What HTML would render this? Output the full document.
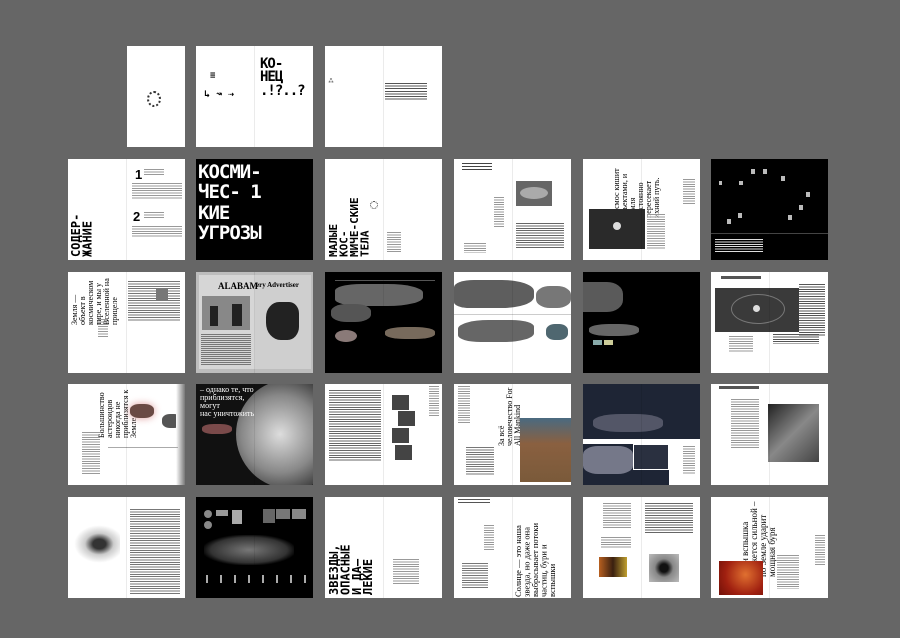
<!DOCTYPE html>
<html><head><meta charset="utf-8"><style>
*{margin:0;padding:0;box-sizing:border-box}
body{width:900px;height:638px;background:#666;position:relative;overflow:hidden;font-family:"Liberation Sans","Noto Sans CJK SC",sans-serif}
.s{position:absolute;width:117px;height:101px;background:#fff;overflow:hidden}
.s:after{content:"";position:absolute;left:58px;top:0;width:1px;height:100%;background:rgba(0,0,0,.08)}
.b{background:#000}
.a{position:absolute}
.t{position:absolute;background:repeating-linear-gradient(#999 0 1px,transparent 1px 2.4px)}
.tw{position:absolute;background:repeating-linear-gradient(#ddd 0 1px,transparent 1px 2.4px)}
.px{position:absolute;font-family:"DejaVu Sans Mono",monospace;font-weight:bold;line-height:.95}
.v{position:absolute;writing-mode:vertical-rl;transform:rotate(180deg);font-weight:bold;font-family:"DejaVu Sans Mono",monospace;line-height:.95}
.sv{position:absolute;writing-mode:vertical-rl;font-family:"Liberation Serif",serif;line-height:1}
</style></head><body>

<!-- ROW 1 -->
<div class="s" style="left:127px;top:46px;width:58px"><div class="a" style="left:20px;top:45px;width:14px;height:16px;border:2px dotted #333;border-radius:50%"></div></div>
<div class="s" style="left:196px;top:46px">
<div class="px" style="left:64px;top:12px;font-size:14px;letter-spacing:-1px">КО-<br>НЕЦ<br>.!?..?</div>
<div class="px" style="left:14px;top:26px;font-size:9px">≡</div>
<div class="px" style="left:8px;top:44px;font-size:10px">↳ ↝ ⇢</div>
</div>
<div class="s" style="left:325px;top:46px">
<div class="a" style="left:3px;top:30px;font-size:6px">⁂</div>
<div class="t" style="left:60px;top:37px;width:42px;height:18px;background:repeating-linear-gradient(#555 0 1px,transparent 1px 2.6px)"></div>
</div>

<!-- ROW 2 -->
<div class="s" style="left:68px;top:159px">
<div class="v" style="left:3px;top:32px;font-size:12px;height:66px">СОДЕР-<br>ЖАНИЕ</div>
<div class="a" style="left:67px;top:8px;font-size:13px;font-weight:bold">1</div>
<div class="t" style="left:76px;top:10px;width:20px;height:6px"></div>
<div class="t" style="left:64px;top:24px;width:50px;height:16px"></div>
<div class="a" style="left:65px;top:50px;font-size:13px;font-weight:bold">2</div>
<div class="t" style="left:76px;top:53px;width:20px;height:6px"></div>
<div class="t" style="left:64px;top:67px;width:50px;height:12px"></div>
</div>
<div class="s b" style="left:196px;top:159px">
<div class="px" style="left:2px;top:3px;font-size:19px;color:#fff;letter-spacing:-1px;line-height:1.07">КОСМИ-<br>ЧЕС- 1<br>КИЕ<br>УГРОЗЫ</div>
</div>
<div class="s" style="left:325px;top:159px">
<div class="v" style="left:4px;top:36px;font-size:11px;height:62px">МАЛЫЕ<br>КОС-<br>МИЧЕ-СКИЕ<br>ТЕЛА</div>
<div class="a" style="left:45px;top:42px;width:8px;height:8px;border:1px dotted #333;border-radius:50%"></div>
<div class="t" style="left:62px;top:73px;width:14px;height:20px"></div>
</div>
<div class="s" style="left:454px;top:159px">
<div class="t" style="left:8px;top:4px;width:30px;height:7px;background:repeating-linear-gradient(#444 0 1px,transparent 1px 3px)"></div>
<div class="a" style="left:62px;top:22px;width:36px;height:25px;background:#666"></div>
<div class="a" style="left:66px;top:28px;width:28px;height:12px;background:#aaa;border-radius:50%"></div>
<div class="t" style="left:40px;top:38px;width:10px;height:30px"></div>
<div class="t" style="left:62px;top:64px;width:48px;height:26px;background:repeating-linear-gradient(#666 0 1px,transparent 1px 2.4px)"></div>
<div class="t" style="left:10px;top:84px;width:22px;height:10px"></div>
</div>
<div class="s" style="left:583px;top:159px">
<div class="sv" style="left:30px;top:3px;font-size:8px;height:56px;width:56px;transform:rotate(180deg)">Космос кишит объектами, и Земля постоянно пересекает ихний путь.</div>
<div class="a" style="left:6px;top:50px;width:56px;height:40px;background:#2a2a2a"></div>
<div class="a" style="left:30px;top:63px;width:8px;height:8px;border-radius:50%;background:#ddd"></div>
<div class="t" style="left:64px;top:55px;width:18px;height:36px"></div>
<div class="t" style="left:100px;top:20px;width:12px;height:26px"></div>
</div>
<div class="s b" style="left:711px;top:159px">
<div class="tw" style="left:4px;top:80px;width:48px;height:14px"></div>
<div class="a" style="left:40px;top:10px;width:4px;height:5px;background:#bbb"></div>
<div class="a" style="left:52px;top:10px;width:4px;height:5px;background:#bbb"></div>
<div class="a" style="left:8px;top:22px;width:3px;height:4px;background:#bbb"></div>
<div class="a" style="left:28px;top:22px;width:4px;height:4px;background:#bbb"></div>
<div class="a" style="left:70px;top:17px;width:4px;height:5px;background:#bbb"></div>
<div class="a" style="left:95px;top:33px;width:4px;height:5px;background:#bbb"></div>
<div class="a" style="left:88px;top:46px;width:4px;height:5px;background:#bbb"></div>
<div class="a" style="left:77px;top:56px;width:4px;height:5px;background:#bbb"></div>
<div class="a" style="left:27px;top:54px;width:4px;height:5px;background:#bbb"></div>
<div class="a" style="left:16px;top:60px;width:4px;height:5px;background:#bbb"></div>
<div class="a" style="left:0;top:74px;width:117px;height:1px;background:#444"></div>
</div>

<!-- ROW 3 -->
<div class="s" style="left:68px;top:272px">
<div class="sv" style="left:3px;top:3px;font-size:8px;height:50px;transform:rotate(180deg)">Земля — объект в космическом тире, и мы у Вселенной на прицеле</div>
<div class="t" style="left:60px;top:9px;width:52px;height:40px;background:repeating-linear-gradient(#777 0 1px,transparent 1px 2.4px)"></div>
<div class="a" style="left:88px;top:16px;width:12px;height:13px;background:#777"></div>
<div class="t" style="left:30px;top:47px;width:10px;height:18px"></div>
</div>
<div class="s" style="left:196px;top:272px;background:#bdbdbd">
<div class="a" style="left:3px;top:3px;width:56px;height:94px;background:#d6d6d6"></div>
<div class="a" style="left:59px;top:3px;width:56px;height:94px;background:#cfcfcf"></div>
<div class="a" style="left:22px;top:9px;font:bold 9px 'Liberation Serif',serif">ALABAM</div>
<div class="a" style="left:60px;top:9px;font:bold 7px 'Liberation Serif',serif">ery Advertiser</div>
<div class="a" style="left:6px;top:24px;width:48px;height:34px;background:#888"></div>
<div class="a" style="left:14px;top:34px;width:8px;height:20px;background:#222"></div>
<div class="a" style="left:36px;top:32px;width:10px;height:22px;background:#222"></div>
<div class="a" style="left:70px;top:30px;width:33px;height:38px;background:#222;border-radius:40% 30% 35% 45%"></div>
<div class="t" style="left:5px;top:62px;width:50px;height:32px;background:repeating-linear-gradient(#777 0 1px,transparent 1px 2px)"></div>
</div>
<div class="s b" style="left:325px;top:272px">
<div class="a" style="left:10px;top:8px;width:100px;height:1px;background:#555"></div>
<div class="a" style="left:10px;top:12px;width:88px;height:22px;background:#666;border-radius:30% 40% 40% 30%"></div>
<div class="a" style="left:6px;top:32px;width:40px;height:18px;background:#555;border-radius:40%"></div>
<div class="a" style="left:10px;top:58px;width:22px;height:12px;background:#8a7a78;border-radius:50%"></div>
<div class="a" style="left:60px;top:55px;width:50px;height:12px;background:#776a5c;border-radius:40%"></div>
</div>
<div class="s" style="left:454px;top:272px">
<div class="a" style="left:0;top:8px;width:80px;height:28px;background:#5e5e5e;border-radius:25% 40% 40% 20%"></div>
<div class="a" style="left:82px;top:14px;width:35px;height:22px;background:#777;border-radius:40%"></div>
<div class="a" style="left:4px;top:48px;width:76px;height:22px;background:#666;border-radius:40% 30%"></div>
<div class="a" style="left:92px;top:52px;width:22px;height:16px;background:#4f6770;border-radius:40%"></div>
<div class="a" style="left:0;top:42px;width:117px;height:1px;background:#ccc"></div>
</div>
<div class="s b" style="left:583px;top:272px">
<div class="a" style="left:0;top:10px;width:40px;height:30px;background:#5a5a5a;border-radius:0 40% 40% 0"></div>
<div class="a" style="left:6px;top:52px;width:50px;height:12px;background:#666;border-radius:40%"></div>
<div class="a" style="left:10px;top:68px;width:9px;height:5px;background:#8aa"></div>
<div class="a" style="left:21px;top:68px;width:9px;height:5px;background:#cc9"></div>
</div>
<div class="s" style="left:711px;top:272px">
<div class="a" style="left:10px;top:4px;width:40px;height:3px;background:#555"></div>
<div class="a" style="left:4px;top:16px;width:84px;height:44px;background:#3a3a3a"></div>
<div class="a" style="left:20px;top:22px;width:54px;height:30px;border:1px solid #777;border-radius:50%"></div>
<div class="a" style="left:42px;top:33px;width:7px;height:7px;background:#ddd;border-radius:50%"></div>
<div class="t" style="left:88px;top:12px;width:26px;height:52px;background:repeating-linear-gradient(#555 0 1px,transparent 1px 2.4px)"></div>
<div class="t" style="left:62px;top:62px;width:46px;height:10px;background:repeating-linear-gradient(#555 0 1px,transparent 1px 2.4px)"></div>
<div class="t" style="left:18px;top:64px;width:24px;height:16px"></div>
</div>

<!-- ROW 4 -->
<div class="s" style="left:68px;top:384px">
<div class="sv" style="left:30px;top:4px;font-size:8px;height:50px;transform:rotate(180deg)">Большинство астероидов никогда не приблизятся к Земле, –</div>
<div class="a" style="left:62px;top:20px;width:24px;height:14px;background:#6a4a44;border-radius:40%;box-shadow:0 0 8px #d99"></div>
<div class="a" style="left:94px;top:30px;width:20px;height:14px;background:#555;border-radius:40%"></div>
<div class="a" style="left:108px;top:0;width:9px;height:101px;background:linear-gradient(90deg,#fff,#777)"></div>
<div class="t" style="left:14px;top:48px;width:18px;height:42px"></div>
<div class="a" style="left:40px;top:63px;width:70px;height:1px;background:#aaa"></div>
</div>
<div class="s b" style="left:196px;top:384px;background:#111">
<div class="a" style="left:40px;top:-5px;width:110px;height:110px;border-radius:50%;background:radial-gradient(circle at 40% 50%,#ddd,#888 45%,#333 75%)"></div>
<div class="a" style="left:4px;top:2px;font:8px/1 'Liberation Serif',serif;color:#fff">– однако те, что<br>приблизятся,<br>могут<br>нас уничтожить</div>
<div class="a" style="left:6px;top:40px;width:30px;height:10px;background:#7a4a4a;border-radius:40%"></div>
</div>
<div class="s" style="left:325px;top:384px">
<div class="t" style="left:4px;top:6px;width:52px;height:72px;background:repeating-linear-gradient(#666 0 1px,transparent 1px 2.4px)"></div>
<div class="a" style="left:67px;top:11px;width:17px;height:15px;background:#444"></div>
<div class="a" style="left:73px;top:27px;width:17px;height:15px;background:#444"></div>
<div class="a" style="left:67px;top:44px;width:17px;height:15px;background:#444"></div>
<div class="a" style="left:70px;top:61px;width:17px;height:15px;background:#444"></div>
<div class="t" style="left:104px;top:2px;width:10px;height:30px"></div>
</div>
<div class="s" style="left:454px;top:384px">
<div class="t" style="left:4px;top:2px;width:12px;height:38px"></div>
<div class="sv" style="left:44px;top:2px;font-size:8px;height:60px;transform:rotate(180deg)">За всё человечество For All Mankind</div>
<div class="t" style="left:12px;top:63px;width:28px;height:28px;background:repeating-linear-gradient(#777 0 1px,transparent 1px 2.4px)"></div>
<div class="a" style="left:66px;top:34px;width:51px;height:64px;background:linear-gradient(#4a6a80,#8a6040 40%,#7a5a3a)"></div>
</div>
<div class="s" style="left:583px;top:384px;background:#1e2535">
<div class="a" style="left:0;top:62px;width:50px;height:28px;background:#ccd;border-radius:30%;opacity:.5"></div>
<div class="a" style="left:10px;top:30px;width:70px;height:18px;background:#889;border-radius:40%;opacity:.5"></div>
<div class="a" style="left:0;top:55px;width:117px;height:5px;background:#fff"></div>
<div class="a" style="left:50px;top:60px;width:36px;height:26px;background:#2a3040;border:1px solid #fff"></div>
<div class="a" style="left:86px;top:58px;width:31px;height:43px;background:#fff"></div>
<div class="t" style="left:100px;top:62px;width:12px;height:28px"></div>
</div>
<div class="s" style="left:711px;top:384px">
<div class="a" style="left:8px;top:2px;width:40px;height:3px;background:#555"></div>
<div class="t" style="left:20px;top:15px;width:28px;height:50px"></div>
<div class="a" style="left:57px;top:20px;width:51px;height:58px;background:linear-gradient(135deg,#222,#888 50%,#444)"></div>
</div>

<!-- ROW 5 -->
<div class="s" style="left:68px;top:497px">
<div class="a" style="left:6px;top:28px;width:46px;height:38px;background:radial-gradient(ellipse at 55% 50%,#333 18%,#ccc 40%,#fff 70%)"></div>
<div class="t" style="left:62px;top:12px;width:50px;height:85px;background:repeating-linear-gradient(#777 0 1px,transparent 1px 2.4px)"></div>
</div>
<div class="s b" style="left:196px;top:497px">
<div class="a" style="left:8px;top:13px;width:8px;height:8px;background:#888;border-radius:50%"></div>
<div class="a" style="left:8px;top:24px;width:8px;height:8px;background:#888;border-radius:50%"></div>
<div class="a" style="left:20px;top:13px;width:12px;height:6px;background:#999"></div>
<div class="a" style="left:36px;top:13px;width:10px;height:14px;background:#aaa"></div>
<div class="a" style="left:67px;top:12px;width:12px;height:14px;background:#666"></div>
<div class="a" style="left:80px;top:12px;width:14px;height:10px;background:#777"></div>
<div class="a" style="left:96px;top:12px;width:14px;height:10px;background:#888"></div>
<div class="a" style="left:8px;top:38px;width:90px;height:30px;background:radial-gradient(ellipse,#777,#333 60%,#000 75%)"></div>
<div class="a" style="left:10px;top:78px;width:100px;height:8px;background:repeating-linear-gradient(90deg,#aaa 0 2px,transparent 2px 14px)"></div>
</div>
<div class="s" style="left:325px;top:497px">
<div class="v" style="left:4px;top:26px;font-size:12px;height:72px">ЗВЕЗДЫ,<br>ОПАСНЫЕ<br>И ДА–<br>ЛЕКИЕ</div>
<div class="t" style="left:68px;top:62px;width:26px;height:26px"></div>
</div>
<div class="s" style="left:454px;top:497px">
<div class="t" style="left:4px;top:2px;width:32px;height:6px;background:repeating-linear-gradient(#555 0 1px,transparent 1px 3px)"></div>
<div class="t" style="left:30px;top:28px;width:10px;height:26px"></div>
<div class="t" style="left:8px;top:66px;width:26px;height:26px;background:repeating-linear-gradient(#777 0 1px,transparent 1px 2.4px)"></div>
<div class="sv" style="left:60px;top:20px;font-size:8.5px;height:80px;transform:rotate(180deg)">Солнце — это наша звезда, но даже она выбрасывает потоки частиц, бури и вспышки</div>
</div>
<div class="s" style="left:583px;top:497px">
<div class="t" style="left:20px;top:6px;width:28px;height:26px"></div>
<div class="t" style="left:62px;top:6px;width:48px;height:30px;background:repeating-linear-gradient(#666 0 1px,transparent 1px 2.4px)"></div>
<div class="t" style="left:18px;top:40px;width:30px;height:12px"></div>
<div class="a" style="left:16px;top:60px;width:28px;height:20px;background:linear-gradient(90deg,#b86020,#3a2010,#c0a030)"></div>
<div class="a" style="left:66px;top:57px;width:30px;height:28px;background:radial-gradient(circle,#111 20%,#888 45%,#bbb)"></div>
</div>
<div class="s" style="left:711px;top:497px">
<div class="sv" style="left:30px;top:2px;font-size:9px;height:78px;transform:rotate(180deg)">Если вспышка окажется сильной – по Земле ударит мощная буря</div>
<div class="a" style="left:8px;top:64px;width:44px;height:34px;background:radial-gradient(circle at 60% 40%,#e07030,#a02010 60%,#701008)"></div>
<div class="t" style="left:66px;top:58px;width:22px;height:34px"></div>
<div class="t" style="left:104px;top:38px;width:10px;height:30px"></div>
</div>

</body></html>
